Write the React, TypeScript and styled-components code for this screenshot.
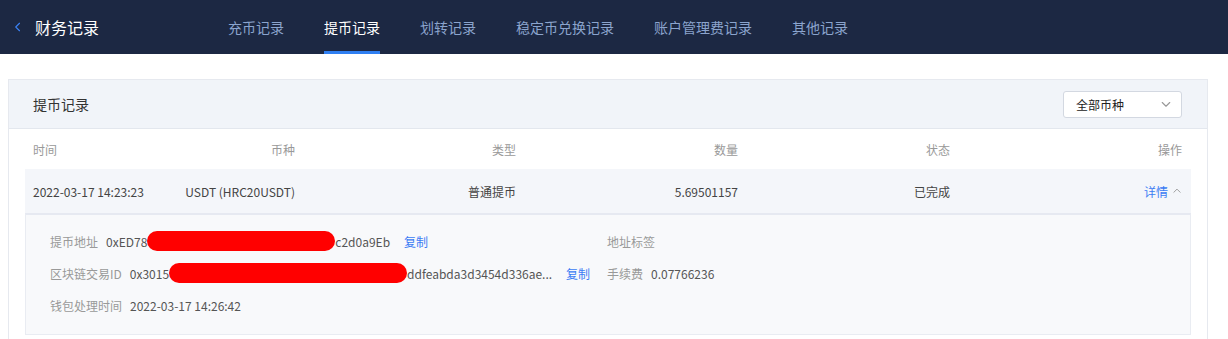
import React from "react";
import styled, { createGlobalStyle } from "styled-components";

const GlobalStyle = createGlobalStyle`
  html, body {
    margin: 0;
    padding: 0;
    background: #fff;
    font-family: "Noto Sans CJK SC", "Liberation Sans", sans-serif;
    font-size: 12px;
    color: #333;
  }
`;

const tabs = ["充币记录", "提币记录", "划转记录", "稳定币兑换记录", "账户管理费记录", "其他记录"];

const Header = styled.header`
  height: 54px;
  background: #1c2843;
  display: flex;
  align-items: stretch;
  padding-left: 12px;
`;

const Brand = styled.div`
  width: 216px;
  display: flex;
  align-items: center;
  gap: 11px;
  color: #fff;
  font-size: 16px;
`;

const Tabs = styled.nav`
  display: flex;
  gap: 40px;
`;

const Tab = styled.div<{ $active?: boolean }>`
  position: relative;
  display: flex;
  align-items: center;
  font-size: 14px;
  color: ${(p) => (p.$active ? "#ffffff" : "#8ba4cd")};
  &::after {
    content: "";
    position: absolute;
    left: 0;
    right: 0;
    bottom: 0;
    height: 3px;
    background: ${(p) => (p.$active ? "#2f7ff2" : "transparent")};
  }
`;

const Page = styled.main`
  padding: 25px 0 0 8px;
`;

const Card = styled.section`
  width: 1200px;
  box-sizing: border-box;
  border: 1px solid #e6e9ef;
  border-bottom: none;
  padding-bottom: 8px;
`;

const CardHead = styled.div`
  height: 48px;
  background: #f1f4f9;
  border-bottom: 1px solid #e3e7ee;
  display: flex;
  align-items: center;
  justify-content: space-between;
  padding: 0 25px 0 24px;
  font-size: 14px;
  color: #333;
`;

const Select = styled.div`
  width: 119px;
  height: 27px;
  box-sizing: border-box;
  border: 1px solid #d3d8e1;
  border-radius: 3px;
  background: #fff;
  display: flex;
  align-items: center;
  justify-content: space-between;
  padding: 0 9px 0 12px;
  font-size: 12px;
  color: #222;
`;

const Table = styled.div`
  padding: 0 16px;
`;

const Row = styled.div<{ $head?: boolean }>`
  display: grid;
  grid-template-columns: 130px 132px 221px 222px 212px 1fr;
  align-items: center;
  height: ${(p) => (p.$head ? "40px" : "44px")};
  padding: 0 9px 0 8px;
  background: ${(p) => (p.$head ? "transparent" : "#f4f6fa")};
  color: ${(p) => (p.$head ? "#999" : "#444")};
  & > div:not(:first-child) {
    text-align: right;
  }
`;

const Action = styled.div`
  display: flex;
  justify-content: flex-end;
  align-items: center;
  gap: 4px;
  color: #3b7cf4;
`;

const Detail = styled.div`
  background: #f8f9fb;
  border: 1px solid #e9ecf2;
  border-top: 2px solid #e6e9f1;
  padding: 16px 24px 19px;
  display: grid;
  grid-template-columns: 557px 1fr;
  grid-auto-rows: 20px;
  row-gap: 12px;
  align-items: center;
`;

const Field = styled.div`
  display: flex;
  align-items: center;
  white-space: nowrap;
`;

const Label = styled.span`
  color: #999;
  margin-right: 8px;
`;

const Value = styled.span`
  color: #555;
  display: inline-flex;
  align-items: center;
`;

const Copy = styled.span<{ $gap: number }>`
  color: #3b7cf4;
  margin-left: ${(p) => p.$gap}px;
`;

const Redact = styled.span<{ $w: number }>`
  display: inline-block;
  width: ${(p) => p.$w}px;
  height: 20px;
  border-radius: 10px;
  background: #ff0000;
`;

const Chevron = ({ d, color, size }: { d: string; color: string; size: number }) => (
  <svg width={size} height={size} viewBox="0 0 16 16" fill="none" stroke={color} strokeWidth="1.5" strokeLinecap="round" strokeLinejoin="round">
    <path d={d} />
  </svg>
);

export default function App() {
  return (
    <>
      <GlobalStyle />
      <Header>
        <Brand>
          <Chevron d="M10 3 L5 8 L10 13" color="#3b82f6" size={12} />
          <span>财务记录</span>
        </Brand>
        <Tabs>
          {tabs.map((t) => (
            <Tab key={t} $active={t === "提币记录"}>
              {t}
            </Tab>
          ))}
        </Tabs>
      </Header>
      <Page>
        <Card>
          <CardHead>
            <span>提币记录</span>
            <Select>
              <span>全部币种</span>
              <Chevron d="M3 6 L8 11 L13 6" color="#999" size={12} />
            </Select>
          </CardHead>
          <Table>
            <Row $head>
              <div>时间</div>
              <div>币种</div>
              <div>类型</div>
              <div>数量</div>
              <div>状态</div>
              <div>操作</div>
            </Row>
            <Row>
              <div>2022-03-17 14:23:23</div>
              <div>USDT (HRC20USDT)</div>
              <div>普通提币</div>
              <div>5.69501157</div>
              <div>已完成</div>
              <Action>
                详情
                <Chevron d="M3 10 L8 5 L13 10" color="#999" size={10} />
              </Action>
            </Row>
            <Detail>
              <Field>
                <Label>提币地址</Label>
                <Value>
                  0xED78<Redact $w={188} />c2d0a9Eb
                </Value>
                <Copy $gap={14}>复制</Copy>
              </Field>
              <Field>
                <Label>地址标签</Label>
              </Field>
              <Field>
                <Label>区块链交易ID</Label>
                <Value>
                  0x3015<Redact $w={238} />ddfeabda3d3454d336ae...
                </Value>
                <Copy $gap={14}>复制</Copy>
              </Field>
              <Field>
                <Label>手续费</Label>
                <Value>0.07766236</Value>
              </Field>
              <Field>
                <Label>钱包处理时间</Label>
                <Value>2022-03-17 14:26:42</Value>
              </Field>
            </Detail>
          </Table>
        </Card>
      </Page>
    </>
  );
}
